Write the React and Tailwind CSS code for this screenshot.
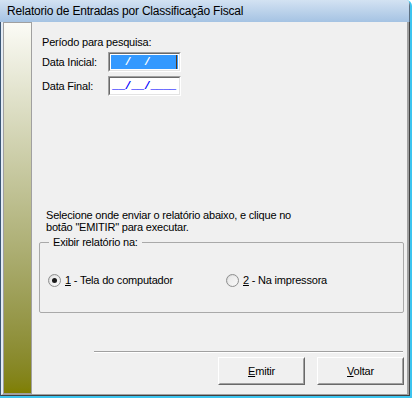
import React from 'react';

const font = { fontFamily: '"Liberation Sans", Arial, sans-serif' };
const mono = { fontFamily: '"Liberation Mono", "Courier New", monospace' };

const Radio = ({ checked }) => (
    <div className="w-[13px] h-[13px] rounded-full border border-[#8e8f8f] bg-gradient-to-br from-[#d6d6d6] to-[#fbfbfb] flex items-center justify-center shrink-0">
        <div className="w-[9px] h-[9px] rounded-full bg-gradient-to-br from-[#e8e8e8] to-[#f8f8f8] flex items-center justify-center">
            {checked && <div className="w-[5px] h-[5px] rounded-full bg-[#1a1a1a]" />}
        </div>
    </div>
);

const Button = ({ accel, rest }) => (
    <button className="w-[87px] h-[28px] bg-[#f0f0f0] border border-t-white border-l-white border-r-[#696969] border-b-[#696969] flex items-center justify-center">
        <div className="w-full h-full border border-t-[#f0f0f0] border-l-[#f0f0f0] border-r-[#a0a0a0] border-b-[#a0a0a0] flex items-center justify-center text-[11px] text-black tracking-[-0.2px]">
            <span><span className="underline">{accel}</span>{rest}</span>
        </div>
    </button>
);

const DateInput = ({ selected }) => (
    <div className="w-[73px] h-[20px] border border-t-[#a0a0a0] border-l-[#a0a0a0] border-r-white border-b-white">
        <div className="w-full h-full border border-t-[#696969] border-l-[#696969] border-r-[#e3e3e3] border-b-[#e3e3e3] bg-white p-[1px]">
            {selected ? (
                <div className="h-full bg-[#3399ff] flex items-center pl-[1px] text-[11px] font-bold leading-none relative" style={mono}>
                    <span className="text-[#3399ff]">__</span><span className="text-white">/</span>
                    <span className="text-[#3399ff]">__</span><span className="text-white">/</span>
                    <span className="text-[#3399ff]">____</span>
                    <div className="absolute right-[1px] top-0 w-[1px] h-full bg-[#5a3a1a]" />
                </div>
            ) : (
                <div className="h-full flex items-center pl-[1px] text-[11px] font-bold leading-none text-[#0000ff]" style={mono}>
                    __/__/____
                </div>
            )}
        </div>
    </div>
);

export default function App() {
    return (
        <div className="w-[412px] h-[398px] bg-[#f0f0f0] flex flex-col overflow-hidden rounded-tr-[6px] border-r-2 border-b-2 border-r-[#3cc4ef] border-b-[#3cc4ef]" style={font}>
            {/* Title bar */}
            <div className="h-[22px] shrink-0 bg-gradient-to-b from-[#d3e2f2] to-[#a5c3e3] border-r border-r-[#5d7184] flex items-center pl-[7px] text-[12px] tracking-[-0.2px] text-black">
                Relatorio de Entradas por Classificação Fiscal
            </div>

            <div className="flex-1 flex border-l border-l-[#3b5775] border-r border-r-[#404040] border-b border-b-[#404040]">
                <div className="flex flex-1 border-l-2 border-l-[#e4ecf5] border-r-2 border-r-[#a0a0a0] border-b border-b-[#a0a0a0]">
                    {/* Side strip */}
                    <div className="w-[29px] shrink-0 border border-[#a0a0a0] bg-gradient-to-b from-[#fbfbf6] to-[#7f7f00]" />

                    {/* Content */}
                    <div className="flex-1 flex flex-col pl-[10px] pr-[1px] text-[11px] text-black tracking-[-0.2px] leading-[13px]">
                        <div className="mt-[14px]">Período para pesquisa:</div>
                        <div className="flex items-center mt-[3px]">
                            <span className="w-[66px]">Data Inicial:</span>
                            <DateInput selected />
                        </div>
                        <div className="flex items-center mt-[4px]">
                            <span className="w-[66px]">Data Final:</span>
                            <DateInput />
                        </div>

                        <div className="mt-[113px] pl-[4px] leading-[12px]">
                            <div>Selecione onde enviar o relatório abaixo, e clique no</div>
                            <div>botão "EMITIR" para executar.</div>
                        </div>

                        <fieldset className="mt-[3px] ml-[-3px] w-[365px] h-[77px] border border-[#a9a9a9] rounded-[2px] px-[8px]">
                            <legend className="px-[4px] ml-[1px]">Exibir relatório na:</legend>
                            <div className="flex items-center mt-[25px]">
                                <div className="flex items-center gap-[4px] w-[178px]">
                                    <Radio checked />
                                    <span><span className="underline">1</span> - Tela do computador</span>
                                </div>
                                <div className="flex items-center gap-[4px]">
                                    <Radio />
                                    <span><span className="underline">2</span> - Na impressora</span>
                                </div>
                            </div>
                        </fieldset>

                        <div className="mt-[38px] ml-[52px] w-[309px] border-t border-t-[#a0a0a0] border-b border-b-white" />

                        <div className="flex justify-end gap-[12px] mt-[4px] pr-[2px]">
                            <Button accel="E" rest="mitir" />
                            <Button accel="V" rest="oltar" />
                        </div>
                    </div>
                </div>
            </div>
        </div>
    );
}
